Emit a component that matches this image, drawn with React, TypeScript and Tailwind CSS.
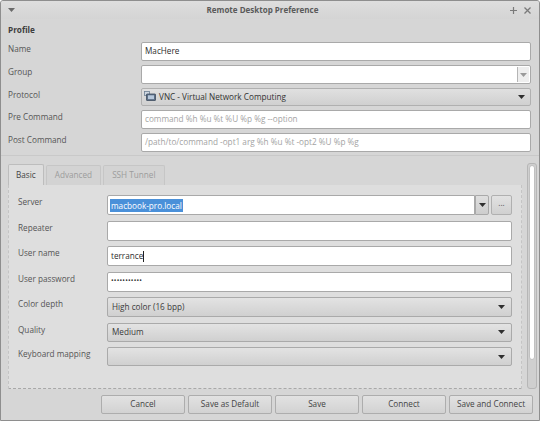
import React from 'react';

const font = { fontFamily: '"Open Sans", "Noto Sans", sans-serif' };

const Arrow = ({ light = false }: { light?: boolean }) => (
  <svg width="7" height="4" viewBox="0 0 7 4" className="shrink-0">
    <path d="M0 0 H7 L3.5 4 Z" fill={light ? '#9a9a9a' : '#2f2f2f'} />
  </svg>
);

const TextBox = ({
  value,
  placeholder,
  className = '',
  children,
}: {
  value?: string;
  placeholder?: string;
  className?: string;
  children?: React.ReactNode;
}) => (
  <div
    className={`flex items-center bg-white border border-[#a9a9a9] rounded-[2px] px-[3px] text-[#2e2e2e] ${className}`}
  >
    {children ?? (value ? <span>{value}</span> : <span className="text-[#a3a3a3]">{placeholder}</span>)}
  </div>
);

const Combo = ({ value, className = '' }: { value?: string; className?: string }) => (
  <div
    className={`flex items-center justify-between bg-gradient-to-b from-[#e3e3e3] to-[#d0d0d0] border border-[#aaaaaa] rounded-[2px] pl-[4px] pr-[6px] text-[#3a3a3a] ${className}`}
  >
    <span>{value}</span>
    <Arrow />
  </div>
);

const Label = ({ children }: { children: React.ReactNode }) => (
  <div className="text-[#555555] leading-none pt-[3px]">{children}</div>
);

export default function App() {
  return (
    <div
      style={font}
      className="w-[540px] h-[421px] bg-[#d6d6d6] border border-[#8e8e8e] rounded-t-[3px] flex flex-col text-[8.2px] overflow-hidden"
    >
      {/* title bar */}
      <div className="h-[18px] flex items-center px-[7px] bg-gradient-to-b from-[#dedede] to-[#d4d4d4]">
        <svg width="7" height="5" viewBox="0 0 7 5">
          <path d="M0 0 H7 L3.5 4 Z" fill="#6a6a6a" />
        </svg>
        <div className="flex-1 text-center font-bold text-[#5a5a5a] text-[8px]">Remote Desktop Preference</div>
        <div className="flex items-center gap-[7px] text-[#777] pr-[1px]">
          <svg width="7" height="7" viewBox="0 0 7 7">
            <path d="M3.5 0 V7 M0 3.5 H7" stroke="#7a7a7a" strokeWidth="1.2" />
          </svg>
          <svg width="7" height="7" viewBox="0 0 7 7">
            <path d="M0.5 0.5 L6.5 6.5 M6.5 0.5 L0.5 6.5" stroke="#7a7a7a" strokeWidth="1.3" />
          </svg>
        </div>
      </div>

      {/* profile */}
      <div className="px-[7px] pt-[7px]">
        <div className="font-bold text-[#3d3d3d] leading-none h-[16px]">Profile</div>
        <div className="grid grid-cols-[133px_1fr] gap-y-[4px] mr-[1px]">
          <Label>Name</Label>
          <TextBox className="h-[19px]" value="MacHere" />
          <Label>Group</Label>
          <div className="flex h-[19px] bg-white border border-[#a9a9a9] rounded-[2px] justify-end p-[1px]">
            <div className="w-[12px] border-l border-[#b5b5b5] bg-[#eeeeee] flex items-center justify-center">
              <Arrow light />
            </div>
          </div>
          <Label>Protocol</Label>
          <div className="flex items-center justify-between h-[18px] bg-gradient-to-b from-[#e0e0e0] to-[#d0d0d0] border border-[#b0b0b0] rounded-[2px] pl-[2px] pr-[5px] text-[#333]">
            <div className="flex items-center gap-[3px]">
              <svg width="12" height="11" viewBox="0 0 12 11">
                <rect x="0.5" y="0.5" width="5" height="4" fill="#cfd8e2" stroke="#6d7f93" strokeWidth="0.8" />
                <rect x="2.5" y="3" width="9" height="6.5" rx="0.5" fill="#5d6f86" stroke="#3d4c60" strokeWidth="0.8" />
                <rect x="4" y="4.3" width="6" height="3.8" fill="#b7c8dc" />
              </svg>
              <span>VNC - Virtual Network Computing</span>
            </div>
            <Arrow />
          </div>
          <Label>Pre Command</Label>
          <TextBox className="h-[19px]" placeholder="command %h %u %t %U %p %g --option" />
          <Label>Post Command</Label>
          <TextBox className="h-[19px]" placeholder="/path/to/command -opt1 arg %h %u %t -opt2 %U %p %g" />
        </div>
      </div>

      {/* notebook */}
      <div className="flex flex-1 mt-[3px] border-t border-[#c9c9c9]">
        <div className="flex-1 flex flex-col pl-[7px] pt-[8px]">
          <div className="flex items-end h-[21px] gap-[2px]">
            <div className="h-[21px] px-[7px] flex items-center bg-[#dedede] border border-b-0 border-[#bdbdbd] rounded-t-[2px] text-[#444]">
              Basic
            </div>
            <div className="h-[20px] px-[8px] flex items-center bg-[#d3d3d3] border border-b-0 border-[#c6c6c6] rounded-t-[2px] text-[#9c9c9c]">
              Advanced
            </div>
            <div className="h-[20px] px-[8px] flex items-center bg-[#d3d3d3] border border-b-0 border-[#c6c6c6] rounded-t-[2px] text-[#9c9c9c]">
              SSH Tunnel
            </div>
          </div>
          <div className="flex-1 bg-[#dedede] border-l border-r border-[#c4c4c4] border-b border-dashed border-b-[#a8a8a8] pl-[9px] pr-[9px] pt-[10px]">
            <div className="grid grid-cols-[89px_1fr] gap-y-[5.5px]">
              <Label>Server</Label>
              <div className="flex h-[20px] gap-[2px]">
                <div className="flex-1 flex items-center bg-white border border-[#a9a9a9] rounded-l-[2px] px-[2px]">
                  <span className="bg-[#4a90d9] text-white px-[1px] leading-[13px]">macbook-pro.local</span>
                </div>
                <div className="w-[14px] -ml-[2px] flex items-center justify-center bg-gradient-to-b from-[#dfdfdf] to-[#cdcdcd] border border-[#a9a9a9] rounded-r-[2px]">
                  <Arrow />
                </div>
                <div className="w-[21px] flex items-center justify-center bg-gradient-to-b from-[#e2e2e2] to-[#d0d0d0] border border-[#b0b0b0] rounded-[2px] text-[#555] leading-none pb-[3px]">
                  ...
                </div>
              </div>
              <Label>Repeater</Label>
              <TextBox className="h-[20px]" />
              <Label>User name</Label>
              <TextBox className="h-[20px] border-[#8fb0d4]">
                <span>terrance</span>
                <span className="w-px h-[11px] bg-[#222]" />
              </TextBox>
              <Label>User password</Label>
              <TextBox className="h-[20px]">
                <span className="text-[#333] text-[7px] tracking-[0.2px]">•••••••••••</span>
              </TextBox>
              <Label>Color depth</Label>
              <Combo className="h-[20px]" value="High color (16 bpp)" />
              <Label>Quality</Label>
              <Combo className="h-[19px]" value="Medium" />
              <Label>Keyboard mapping</Label>
              <Combo className="h-[19px]" />
            </div>
          </div>
        </div>
        {/* scrollbar */}
        <div className="w-[10px] ml-[5px] mr-[2px] mt-[7px] border border-[#b6b6b6] rounded-[3px] bg-[#cfcfcf] p-[1px] flex flex-col">
          <div className="h-[195px] bg-white border border-[#c0c0c0] rounded-[3px]" />
        </div>
      </div>

      {/* buttons */}
      <div className="h-[31px] flex items-center justify-end gap-[3px] pr-[6px] pb-[1px]">
        {['Cancel', 'Save as Default', 'Save', 'Connect', 'Save and Connect'].map((b) => (
          <div
            key={b}
            className="w-[84px] h-[19px] flex items-center justify-center bg-gradient-to-b from-[#e2e2e2] to-[#d2d2d2] border border-[#adadad] rounded-[2px] text-[#444]"
          >
            {b}
          </div>
        ))}
      </div>
    </div>
  );
}
